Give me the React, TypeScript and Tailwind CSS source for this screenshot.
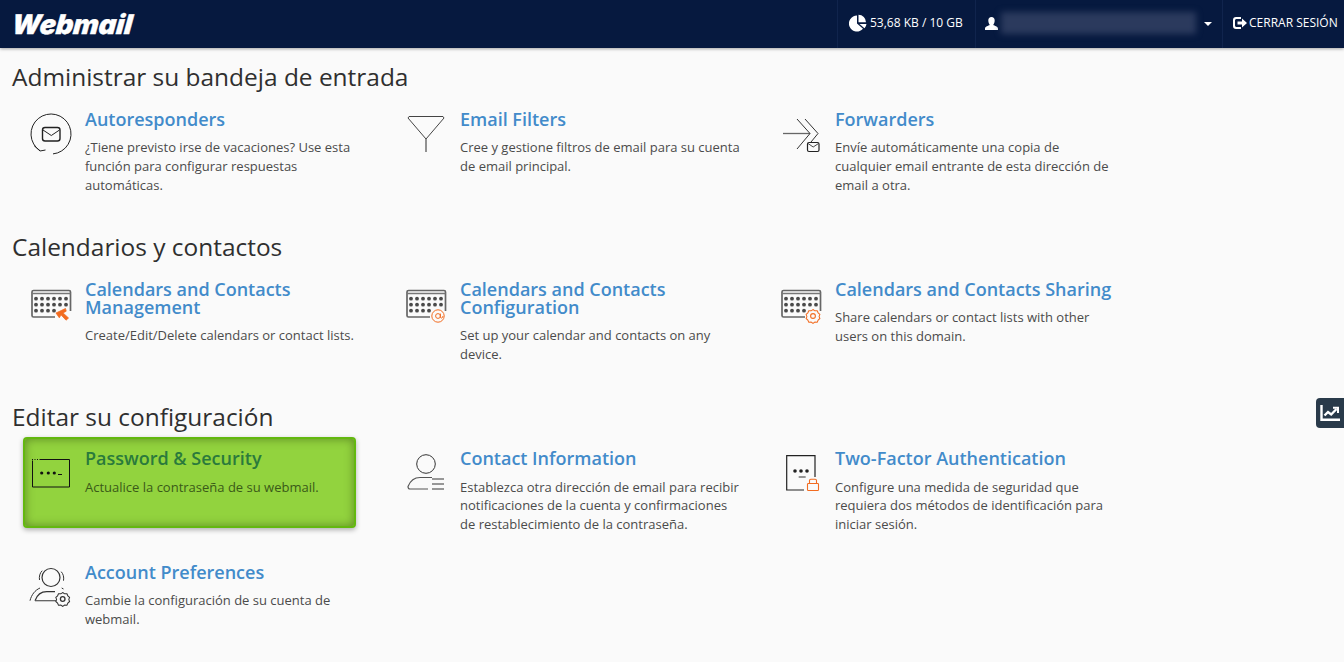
import type { ReactNode } from 'react'

const orange = '#f26c21'

function Svg({ children }: { children: ReactNode }) {
  return (
    <svg width="48" height="48" viewBox="0 0 48 48" fill="none" stroke="#333" strokeWidth="1">
      {children}
    </svg>
  )
}

function CalendarBase() {
  const dots = []
  for (let r = 0; r < 3; r++) {
    for (let c = 0; c < 6; c++) {
      if (r === 2 && c > 3) continue
      dots.push(<circle key={`${r}-${c}`} cx={9 + c * 6} cy={18.7 + r * 6} r="1.900" fill="#4a4a4a" stroke="none" />)
    }
  }
  return (
    <>
      <path d="M28 37H6.500A1.500 1.500 0 0 1 5 35.500V12a1.500 1.500 0 0 1 1.500-1.500h35.500a1.500 1.500 0 0 1 1.500 1.500v19" stroke="#666" strokeWidth="1.700" />
      <path d="M5 13.500h38.500" stroke="#777" strokeWidth="1.300" />
      {dots}
    </>
  )
}

const gear =
  'M36 28.500l2.200 1.500 2.700-.2 1.100 2.500 2 1.800-.9 2.400.9 2.400-2 1.800-1.100 2.500-2.700-.2-2.200 1.500-2.200-1.500-2.700.2-1.100-2.500-2-1.800.9-2.400-.9-2.400 2-1.800 1.100-2.500 2.700.2z'

const icons: Record<string, ReactNode> = {
  auto: (
    <Svg>
      <path d="M13 40.700A20 20 0 1 1 26 43.900" stroke="#222" />
      <path d="M7 35.500l6 5.500 5.500-1" stroke="#222" />
      <rect x="15.500" y="17.500" width="17.500" height="13.500" rx="2.500" stroke="#222" strokeWidth="1.400" />
      <path d="M16 20l8.300 5.500L32.500 20" stroke="#222" />
    </Svg>
  ),
  filter: (
    <Svg>
      <path d="M7 6.500h34l1 1.500L24 29 6 8z" stroke="#444" />
      <path d="M24 29v13" stroke="#777" strokeWidth="1.600" />
    </Svg>
  ),
  forward: (
    <Svg>
      <path d="M6 23.500h27" stroke="#666" strokeWidth="1.300" />
      <path d="M20 9l13 14.500L20 39" stroke="#333" />
      <path d="M28 9l13 14.500-7 8.500" stroke="#333" />
      <rect x="30.500" y="32.500" width="11.500" height="9" rx="1.500" stroke="#222" strokeWidth="1.200" />
      <path d="M31 33.500l5.200 3.500 5.300-3.500" stroke="#333" strokeWidth="0.900" />
    </Svg>
  ),
  calMgmt: (
    <Svg>
      <CalendarBase />
      <path d="M29 33l9.500-4.500.7 2.700-3.200 1.700 5.500 5.100-2.500 2.200-5-5.400-1.700 3z" fill={orange} stroke={orange} strokeWidth="0.800" />
    </Svg>
  ),
  calConf: (
    <Svg>
      <CalendarBase />
      <circle cx="36" cy="36" r="7.500" fill="#fafafa" stroke="none" />
      <circle cx="36" cy="36" r="6.200" stroke={orange} />
      <circle cx="36" cy="36" r="2.400" stroke={orange} />
      <path d="M38.400 33.600v3.200c0 2 2.500 1.600 2.500-.8" stroke={orange} />
    </Svg>
  ),
  calShare: (
    <Svg>
      <CalendarBase />
      <circle cx="36" cy="36" r="8" fill="#fafafa" stroke="none" />
      <path d={gear} stroke={orange} strokeWidth="1.200" transform="translate(36 36) scale(.86) translate(-36 -36)" />
      <circle cx="36" cy="36" r="2.400" stroke={orange} strokeWidth="1.100" />
    </Svg>
  ),
  password: (
    <svg width="48" height="48" viewBox="0 0 48 48" fill="none" stroke="#111">
      <path d="M13 10.500h29.500v27.500H5.500V11.500" />
      <path d="M5 10.500h8" strokeDasharray="1 1.500" />
      <circle cx="14.700" cy="24" r="1.600" fill="#111" stroke="none" />
      <circle cx="21.300" cy="24" r="1.600" fill="#111" stroke="none" />
      <circle cx="27.300" cy="24" r="1.600" fill="#111" stroke="none" />
      <path d="M31 25.500h4" />
    </svg>
  ),
  contact: (
    <Svg>
      <circle cx="24" cy="15" r="9.300" stroke="#333" />
      <path d="M30 28.500H18c-6 0-10 4-12 9 0 1.500.5 2.500 2 2.500h18" stroke="#555" strokeWidth="1.200" />
      <path d="M30 30h12M30 35h12M30 40h12" stroke="#777" strokeWidth="1.300" />
    </Svg>
  ),
  twofa: (
    <Svg>
      <path d="M38 28V6.700H9.700V41H27" stroke="#222" strokeWidth="1.200" />
      <circle cx="18" cy="22" r="1.800" fill="#222" stroke="none" />
      <circle cx="24" cy="22" r="1.800" fill="#222" stroke="none" />
      <circle cx="30" cy="22" r="1.800" fill="#222" stroke="none" />
      <path d="M21.700 28h7" stroke="#333" />
      <rect x="30.500" y="34.500" width="11" height="7" rx="0.800" stroke={orange} strokeWidth="1.100" />
      <path d="M32.500 34.500v-3c0-.8.500-1.300 1.300-1.300h4.400c.8 0 1.300.5 1.300 1.300v3" stroke={orange} strokeWidth="1.100" />
    </Svg>
  ),
  prefs: (
    <Svg>
      <circle cx="24" cy="14.500" r="9" stroke="#333" strokeWidth="1.200" />
      <path d="M12.500 17c-.6-3.500.4-7 2.700-9.300M36.500 17.700c.6-3.500-.2-6.800-2.300-9" stroke="#333" />
      <path d="M8 37.700c2-5.500 6-9 11.700-9H28" stroke="#333" strokeWidth="1.200" />
      <path d="M3 37.700c1.500-6 5-10.500 10-12.700M34.700 25l1.800 1" stroke="#333" />
      <path d="M8 37.700h21" stroke="#555" strokeWidth="1.200" />
      <path d={gear} stroke="#333" strokeWidth="1.200" transform="translate(35.700 36) scale(.86) translate(-36 -36)" />
      <circle cx="35.700" cy="36" r="2.300" stroke="#333" strokeWidth="1.300" />
    </Svg>
  ),
}

type Item = { icon: string; title: string; text: string; active?: boolean }

function Tile({ icon, title, text, active }: Item) {
  return (
    <a
      className={
        active
          ? 'flex h-[91px] w-[333px] -ml-px mr-[43px] mt-[6.6px] pl-[2px] pt-[7.4px] rounded-[4px] border-[2px] border-[#63b80f] bg-[#92d33e] shadow-[inset_0_0_10px_rgba(60,90,20,0.6),0_2px_5px_rgba(0,0,0,0.3)]'
        : 'flex w-[375px] pl-[3px] pt-[16px]'
      }
    >
      <div className="w-[58px] shrink-0 pt-[3px]">{icons[icon]}</div>
      <div className="w-[281px] shrink-0">
        <h3 className={`pt-[3px] text-[18px] font-semibold leading-[18px] ${active ? 'text-[#2a7a3c]' : 'text-[#428bca]'}`}>
          {title}
        </h3>
        <p className={`mt-[10.4px] text-[13px] leading-[18.57px] ${active ? 'text-[#3a5a18]' : 'text-[#4b4b4b]'}`}>{text}</p>
      </div>
    </a>
  )
}

function Section({ title, items, height, nudge }: { title: string; items: Item[]; height: number[]; nudge?: boolean }) {
  const rows: Item[][] = []
  for (let i = 0; i < items.length; i += 3) rows.push(items.slice(i, i + 3))
  return (
    <section>
      <h2 className={`pl-3 text-[24.44px] leading-[28px] text-[#2f2f2f] ${nudge ? 'mb-[-0.6px]' : ''}`}>{title}</h2>
      {rows.map((row, i) => (
        <div key={i} className="flex pl-[24px]" style={{ height: height[i] }}>
          {row.map((item) => (
            <Tile key={item.title} {...item} />
          ))}
        </div>
      ))}
    </section>
  )
}

export default function App() {
  return (
    <div className="relative h-[662px] w-[1344px] overflow-hidden bg-[#fafafa] font-['Open_Sans',sans-serif]">
      <header className="flex h-12 items-stretch bg-[#06193f] text-[12px] text-white shadow-[0_1px_3px_rgba(0,0,0,0.35)]">
        <div className="flex items-center pl-3">
          <span className="inline-block -skew-x-6 font-['Inter',sans-serif] text-[27px] font-black italic leading-none text-white [-webkit-text-stroke:0.4px_white]">
            Webmail
          </span>
        </div>
        <div className="ml-auto flex w-[138px] items-center border-l border-[#10244d] pb-[2px] pl-[11px]">
          <svg width="18" height="18" viewBox="0 0 18 18" fill="#fff">
            <path d="M8 1.500a8 8 0 1 0 6 13.200L8 9.500z" />
            <path d="M9.500 .8v7.500h7.500a7.500 7.500 0 0 0-7.500-7.500z" />
            <path d="M10.500 10h7a8 8 0 0 1-2 4.300z" />
          </svg>
          <span className="ml-[3px]">53,68 KB / 10 GB</span>
        </div>
        <div className="flex w-[247px] items-center border-l border-[#10244d] pb-[2px] pl-[9px]">
          <svg width="13" height="13" viewBox="0 0 13 13" fill="#fff">
            <path d="M6.500 0c2 0 3.200 1.500 3.200 3.500S8.700 7 8.200 8c1.500.8 4.800 1.500 4.800 3.500V13H0v-1.500C0 9.500 3.300 8.800 4.800 8c-.5-1-1.500-2.500-1.500-4.500S4.500 0 6.500 0z" />
          </svg>
          <div className="ml-[3px] h-[22px] w-[195px] bg-[#2b3a5d] blur-[3px]" />
          <div className="ml-[8px] mt-[1px] h-0 w-0 border-x-[4px] border-t-[4px] border-x-transparent border-t-white" />
        </div>
        <div className="flex w-[122px] items-center border-l border-[#10244d] pb-[2px] pl-[10px]">
          <svg width="14" height="12" viewBox="0 0 14 12" fill="#fff">
            <path d="M3 0h5v2H3.500C2.700 2 2 2.700 2 3.500v5C2 9.300 2.700 10 3.500 10H8v2H3a3 3 0 0 1-3-3V3a3 3 0 0 1 3-3z" />
            <path d="M4.500 4.500H9V1.500L14 6l-5 4.500v-3H4.500z" />
          </svg>
          <span className="ml-[2px] uppercase">Cerrar sesión</span>
        </div>
      </header>

      <main className="pt-[15px]">
        <Section
          title="Administrar su bandeja de entrada"
          height={[142]}
          items={[
            { icon: 'auto', title: 'Autoresponders', text: '¿Tiene previsto irse de vacaciones? Use esta función para configurar respuestas automáticas.' },
            { icon: 'filter', title: 'Email Filters', text: 'Cree y gestione filtros de email para su cuenta de email principal.' },
            { icon: 'forward', title: 'Forwarders', text: 'Envíe automáticamente una copia de cualquier email entrante de esta dirección de email a otra.' },
          ]}
        />
        <Section
          title="Calendarios y contactos"
          height={[142]}
          items={[
            { icon: 'calMgmt', title: 'Calendars and Contacts Management', text: 'Create/Edit/Delete calendars or contact lists.' },
            { icon: 'calConf', title: 'Calendars and Contacts Configuration', text: 'Set up your calendar and contacts on any device.' },
            { icon: 'calShare', title: 'Calendars and Contacts Sharing', text: 'Share calendars or contact lists with other users on this domain.' },
          ]}
        />
        <Section
          title="Editar su configuración"
          height={[113.6, 100]}
          nudge
          items={[
            { icon: 'password', title: 'Password & Security', text: 'Actualice la contraseña de su webmail.', active: true },
            { icon: 'contact', title: 'Contact Information', text: 'Establezca otra dirección de email para recibir notificaciones de la cuenta y confirmaciones de restablecimiento de la contraseña.' },
            { icon: 'twofa', title: 'Two-Factor Authentication', text: 'Configure una medida de seguridad que requiera dos métodos de identificación para iniciar sesión.' },
            { icon: 'prefs', title: 'Account Preferences', text: 'Cambie la configuración de su cuenta de webmail.' },
          ]}
        />
      </main>

      <button className="absolute right-0 top-[398px] flex h-[30px] w-[28px] items-center justify-center rounded-l-[4px] bg-[#293a4a]">
        <svg width="20" height="18" viewBox="0 0 20 18" fill="none" stroke="#fff" strokeWidth="2.400">
          <path d="M1.500 1v14.800H20" />
          <path d="M4.500 11.500l3.500-3.500 3.200 2.500L16.500 5" />
          <path d="M13 3.800h5V9" strokeWidth="2" />
        </svg>
      </button>
    </div>
  )
}
